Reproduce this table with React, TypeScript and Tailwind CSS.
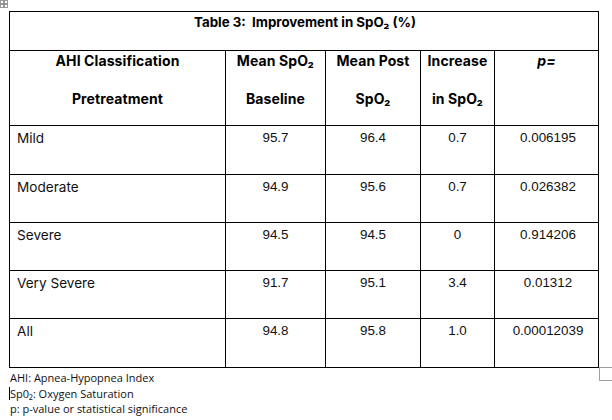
import React from 'react';

type Row = {
  label: string;
  baseline: string;
  post: string;
  increase: string;
  p: string;
  h: string;
};

const rows: Row[] = [
  { label: 'Mild', baseline: '95.7', post: '96.4', increase: '0.7', p: '0.006195', h: 'h-[48px]' },
  { label: 'Moderate', baseline: '94.9', post: '95.6', increase: '0.7', p: '0.026382', h: 'h-[47px]' },
  { label: 'Severe', baseline: '94.5', post: '94.5', increase: '0', p: '0.914206', h: 'h-[47px]' },
  { label: 'Very Severe', baseline: '91.7', post: '95.1', increase: '3.4', p: '0.01312', h: 'h-[47px]' },
  { label: 'All', baseline: '94.8', post: '95.8', increase: '1.0', p: '0.00012039', h: 'h-[48px]' },
];

const head = "font-['Inter',sans-serif] font-bold text-[14px] tracking-[0.1px] text-black";
const body = "font-['Inter',sans-serif] text-[13.6px] text-[#111]";
const num = "font-['Liberation_Sans',Arial,sans-serif] text-[13.4px] text-[#111]";

function HeaderCell({ top, bottom }: { top: React.ReactNode; bottom?: React.ReactNode }) {
  return (
    <div className={`bg-white h-[74px] flex flex-col items-center pt-[1px] ${head}`}>
      <div className="leading-[18px]">{top}</div>
      <div className="leading-[18px] mt-[20px]">{bottom}</div>
    </div>
  );
}

export default function App() {
  return (
    <div className="relative w-[612px] h-[420px] bg-white overflow-hidden">
      {/* table move handle */}
      <div className="absolute left-0 top-0 w-[8px] h-[8px] border border-[#9a9a9a] bg-white flex items-center justify-center">
        <svg width="6" height="6" viewBox="0 0 6 6" fill="none" stroke="#444" strokeWidth="0.8">
          <path d="M3 0.3V5.7M0.3 3H5.7M2.2 1.1L3 0.3L3.8 1.1M2.2 4.9L3 5.7L3.8 4.9M1.1 2.2L0.3 3L1.1 3.8M4.9 2.2L5.7 3L4.9 3.8" />
        </svg>
      </div>

      <div className="pl-[9px] pt-[11px]">
        <div className="w-[590px] grid grid-cols-[215px_99px_94px_73px_103px] gap-px bg-black p-px">
          {/* title */}
          <div className="col-span-5 h-[38px] bg-white flex justify-center pt-[1px] font-['Inter',sans-serif] font-bold text-[13.3px] text-black">
            <span className="leading-[18px] pl-[2px]">Table 3:&nbsp; Improvement in SpO₂ (%)</span>
          </div>

          {/* header */}
          <HeaderCell top="AHI Classification" bottom="Pretreatment" />
          <HeaderCell top="Mean SpO₂" bottom="Baseline" />
          <HeaderCell top="Mean Post" bottom="SpO₂" />
          <HeaderCell top="Increase" bottom="in SpO₂" />
          <HeaderCell top={<i>p=</i>} />

          {rows.map((r) => (
            <React.Fragment key={r.label}>
              <div className={`bg-white ${r.h} pl-[7px] pt-[3px] leading-[18px] ${body}`}>{r.label}</div>
              <div className={`bg-white ${r.h} text-center pt-[3px] leading-[18px] ${num}`}>{r.baseline}</div>
              <div className={`bg-white ${r.h} text-center pt-[3px] leading-[18px] ${num}`}>{r.post}</div>
              <div className={`bg-white ${r.h} text-center pt-[3px] leading-[18px] ${num}`}>{r.increase}</div>
              <div className={`bg-white ${r.h} text-center pt-[3px] pl-[3px] leading-[18px] ${num}`}>{r.p}</div>
            </React.Fragment>
          ))}
        </div>

        <div className="pl-[1px] pt-[2px] font-['Open_Sans',sans-serif] text-[11px] leading-[15.5px] text-[#111]">
          <div>AHI: Apnea-Hypopnea Index</div>
          <div className="flex items-center">
            <span className="w-px h-[13px] bg-black -ml-px" />
            <span>Sp0₂: Oxygen Saturation</span>
          </div>
          <div>p: p-value or statistical significance</div>
        </div>
      </div>

      {/* resize handle */}
      <div className="absolute left-[599px] top-[367px] w-[14px] h-[14px] border border-[#a0a0a0] bg-white" />
    </div>
  );
}
